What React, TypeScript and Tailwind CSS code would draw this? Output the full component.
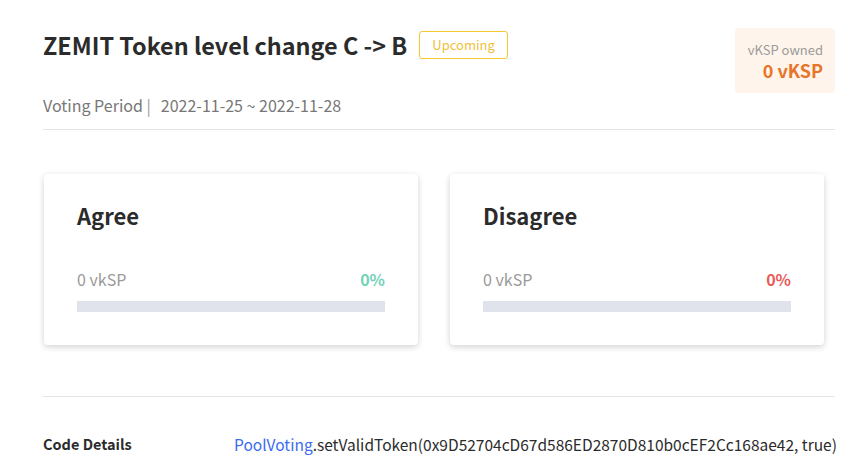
import React from "react";

const FONT = { fontFamily: '"Noto Sans CJK KR", "Noto Sans", sans-serif' };

type VoteCardProps = {
  title: string;
  amount: string;
  percent: string;
  percentClass: string;
};

function VoteCard({ title, amount, percent, percentClass }: VoteCardProps) {
  return (
    <div className="h-[171px] w-[374px] shrink-0 rounded-[4px] bg-white px-[33px] pt-[27px] shadow-[0_2px_6px_rgba(0,0,0,0.18)]">
      <h3 className="text-[22px] font-bold leading-[28px] text-[#2b2b2b]">{title}</h3>
      <div className="mt-[40px] flex items-center justify-between text-[16px] leading-[20px]">
        <span className="text-[#9a9a9a]">{amount}</span>
        <span className={`font-bold ${percentClass}`}>{percent}</span>
      </div>
      <div className="mt-[12px] h-[11px] w-full bg-[#e0e3eb]" />
    </div>
  );
}

export default function App() {
  return (
    <div className="min-h-[470px] w-[851px] bg-white pl-[43px] pr-[16px] pt-[28px] text-[#333]" style={FONT}>
      <div className="flex items-start justify-between">
        <div>
          <div className="flex items-center gap-[12px]">
            <h1 className="text-[23.4px] font-bold leading-[34px] text-[#2b2b2b]">
              ZEMIT Token level change C -&gt; B
            </h1>
            <span className="rounded-[3px] border border-[#f5c830] px-[12px] py-[3px] text-[13px] leading-[20px] text-[#f0bf3a]">
              Upcoming
            </span>
          </div>
          <div className="mt-[32px] text-[16px] leading-[22px] text-[#777]">
            Voting Period <span className="text-[#999]">|</span>
            <span className="ml-[10px]">2022-11-25 ~ 2022-11-28</span>
          </div>
        </div>
        <div className="flex h-[65px] w-[100px] flex-col items-end justify-center rounded-[4px] bg-[#fff4eb] pr-[12px]">
          <span className="text-[13px] leading-[18px] text-[#9a9a9a]">vKSP owned</span>
          <span className="text-[18px] font-bold leading-[22px] text-[#e8742a]">0 vKSP</span>
        </div>
      </div>

      <div className="mt-[13px] border-t border-[#e4e4e8]" />

      <div className="mt-[44px] flex gap-[32px] pl-[1px]">
        <VoteCard title="Agree" amount="0 vkSP" percent="0%" percentClass="text-[#72d2b8]" />
        <VoteCard title="Disagree" amount="0 vkSP" percent="0%" percentClass="text-[#e85a5a]" />
      </div>

      <div className="mt-[51px] border-t border-[#e4e4e8]" />

      <div className="mt-[37px] flex items-center leading-[20px]">
        <span className="w-[191px] shrink-0 text-[14.5px] font-bold text-[#2b2b2b]">Code Details</span>
        <span className="whitespace-nowrap text-[15.5px] text-[#2b2b2b]">
          <span className="text-[#3a6cf0]">PoolVoting</span>
          .setValidToken(0x9D52704cD67d586ED2870D810b0cEF2Cc168ae42, true)
        </span>
      </div>
    </div>
  );
}
